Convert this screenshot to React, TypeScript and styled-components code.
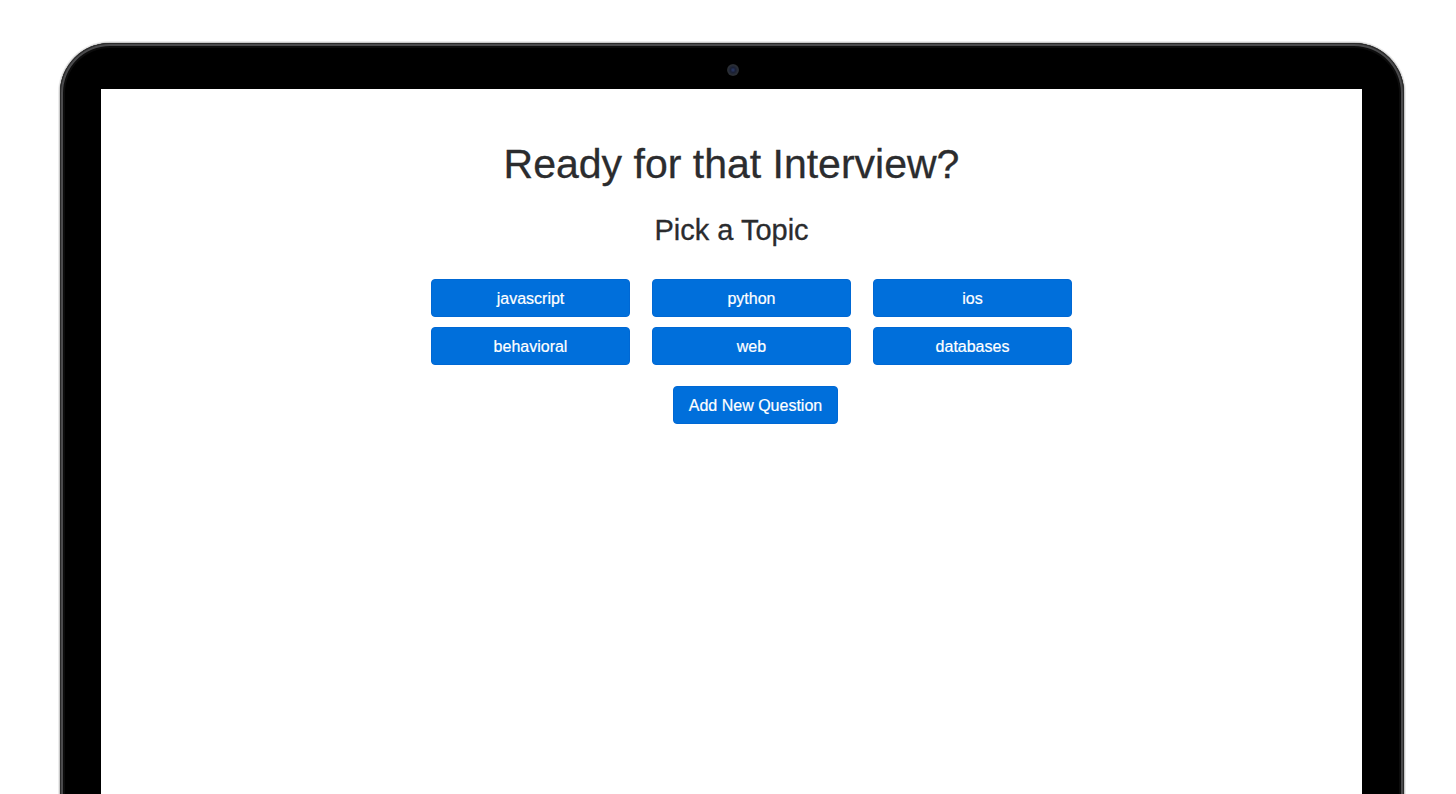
import React from "react";
import styled, { createGlobalStyle } from "styled-components";

const topics = ["javascript", "python", "ios", "behavioral", "web", "databases"];

const GlobalStyle = createGlobalStyle`
  html, body {
    margin: 0;
    padding: 0;
    background: #ffffff;
    overflow: hidden;
  }
  body {
    font-family: "Liberation Sans", Arial, Helvetica, sans-serif;
  }
`;

const App: React.FC = () => {
  return (
    <>
      <GlobalStyle />
      <Stage>
        <Laptop>
          <Camera />
          <Screen>
            <Title>Ready for that Interview?</Title>
            <Subtitle>Pick a Topic</Subtitle>
            <Content>
              <TopicGrid>
                {topics.map((t) => (
                  <TopicButton key={t}>{t}</TopicButton>
                ))}
              </TopicGrid>
              <AddButton>Add New Question</AddButton>
            </Content>
          </Screen>
        </Laptop>
      </Stage>
    </>
  );
};

const Stage = styled.div`
  width: 1456px;
  height: 794px;
  overflow: hidden;
  box-sizing: border-box;
  padding: 43px 0 0 60px;
`;

const Laptop = styled.div`
  position: relative;
  width: 1344px;
  height: 900px;
  box-sizing: border-box;
  padding: 46px 42px 0 41px;
  background: #000000;
  border-radius: 50px;
  box-shadow:
    inset 0 0 0 1px #2a2a2a,
    inset 0 0 0 3px #4a4a4c,
    inset 0 0 0 5px #0c0c0c,
    0 0 0 1px #c9c9c9,
    0 0 0 2px #ececec;
`;

const Camera = styled.div`
  position: absolute;
  top: 21px;
  left: 667px;
  width: 12px;
  height: 12px;
  border-radius: 50%;
  background: radial-gradient(circle at 50% 50%, #2a3a6a 0, #1a2035 30%, #2b2f35 60%, #101214 100%);
`;

const Screen = styled.div`
  height: 100%;
  background: #ffffff;
  box-sizing: border-box;
  padding-top: 50px;
  display: flex;
  flex-direction: column;
  align-items: center;
`;

const Title = styled.h1`
  margin: 0;
  font-size: 41px;
  line-height: 50px;
  font-weight: 400;
  color: #2b2c2e;
  text-align: center;
  -webkit-text-stroke: 0.3px #2b2c2e;
`;

const Subtitle = styled.h2`
  margin: 24px 0 0;
  font-size: 29px;
  line-height: 35px;
  font-weight: 400;
  color: #2b2c2e;
  text-align: center;
  -webkit-text-stroke: 0.3px #2b2c2e;
`;

const Content = styled.div`
  align-self: stretch;
  box-sizing: border-box;
  padding-left: 40px;
  margin-top: 31px;
  display: flex;
  flex-direction: column;
  align-items: center;
`;

const TopicGrid = styled.div`
  display: grid;
  grid-template-columns: repeat(3, 199px);
  grid-auto-rows: 38px;
  column-gap: 22px;
  row-gap: 10px;
`;

const BaseButton = styled.button`
  box-sizing: border-box;
  height: 38px;
  border: 1px solid #0068d4;
  border-radius: 4px;
  background: #006fdb;
  color: #ffffff;
  font-family: "Liberation Sans", Arial, Helvetica, sans-serif;
  font-size: 16px;
  line-height: 1;
  padding: 2px 8px 0;
  white-space: nowrap;
  -webkit-text-stroke: 0.2px #ffffff;
  cursor: pointer;
`;

const TopicButton = styled(BaseButton)`
  width: 199px;
`;

const AddButton = styled(BaseButton)`
  margin-top: 21px;
  margin-left: 8px;
  width: 165px;
`;

export default App;
